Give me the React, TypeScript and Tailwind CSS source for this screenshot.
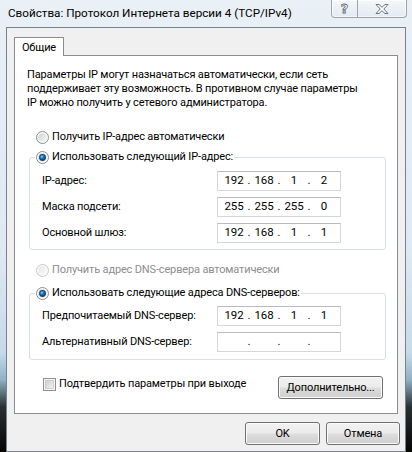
import React from 'react';

type IpValue = [string, string, string, string];

const glass =
  "bg-[linear-gradient(to_bottom,#e9f0f6_0%,#dfe9f2_55%,#c6dae8_78%,#8fb2c6_84%,#2a2f33_90%,#050505_100%)]";

function Radio({ checked = false, disabled = false }: { checked?: boolean; disabled?: boolean }) {
  return (
    <svg width="13" height="13" viewBox="0 0 13 13" className="shrink-0">
      <defs>
        <linearGradient id="rb-in" x1="0" y1="0" x2="1" y2="1">
          <stop offset="0" stopColor="#cfd1d3" />
          <stop offset="1" stopColor="#f7f7f7" />
        </linearGradient>
        <linearGradient id="rb-in-d" x1="0" y1="0" x2="1" y2="1">
          <stop offset="0" stopColor="#e6e6e6" />
          <stop offset="1" stopColor="#fbfbfb" />
        </linearGradient>
        <radialGradient id="rb-dot" cx="0.4" cy="0.35" r="0.7">
          <stop offset="0" stopColor="#8fd0ff" />
          <stop offset="0.45" stopColor="#1f72c4" />
          <stop offset="1" stopColor="#0b3a6e" />
        </radialGradient>
      </defs>
      <circle cx="6.5" cy="6.5" r="6" fill="#fafafa" stroke={disabled ? '#c6c7c8' : '#8b8d8f'} strokeWidth="1" />
      <circle cx="6.5" cy="6.5" r="4.3" fill={disabled ? 'url(#rb-in-d)' : 'url(#rb-in)'} />
      {checked && (
        <>
          <circle cx="6.5" cy="6.5" r="3.4" fill="#1c3f66" />
          <circle cx="6.5" cy="6.5" r="2.8" fill="url(#rb-dot)" />
        </>
      )}
    </svg>
  );
}

function Checkbox() {
  return (
    <svg width="13" height="13" viewBox="0 0 13 13" className="shrink-0">
      <defs>
        <linearGradient id="cb-in" x1="0" y1="0" x2="1" y2="1">
          <stop offset="0" stopColor="#cbcdcf" />
          <stop offset="1" stopColor="#f4f4f4" />
        </linearGradient>
      </defs>
      <rect x="0.5" y="0.5" width="12" height="12" fill="#f6f6f6" stroke="#8e8f8f" />
      <rect x="2.5" y="2.5" width="8" height="8" fill="url(#cb-in)" stroke="#b9bbbd" strokeWidth="0.6" />
    </svg>
  );
}

function IpBox({ value }: { value?: IpValue }) {
  const parts = value ?? ['', '', '', ''];
  return (
    <div className="w-[124px] h-[20px] bg-white border border-[#d3d6da] border-t-[#b8bcc2] flex items-center pl-[3px] leading-none text-[11.5px]">
      {parts.map((p, i) => (
        <React.Fragment key={i}>
          <span className="w-[26px] text-center">{p}</span>
          {i < 3 && <span className="w-[4px] text-center">.</span>}
        </React.Fragment>
      ))}
    </div>
  );
}

function Row({ label, value }: { label: string; value?: IpValue }) {
  return (
    <div className="flex items-center h-[20px]">
      <span className="w-[175px] leading-[14px] whitespace-nowrap">{label}</span>
      <IpBox value={value} />
    </div>
  );
}

function Button({ children, className = '' }: { children: React.ReactNode; className?: string }) {
  return (
    <button
      className={`h-[23px] rounded-[3px] border border-[#707070] bg-[linear-gradient(to_bottom,#f2f2f2_0%,#ebebeb_48%,#dddddd_52%,#cfcfcf_100%)] shadow-[inset_0_0_0_1px_#fbfbfb] text-[11px] tracking-[-0.15px] leading-none text-black whitespace-nowrap ${className}`}
    >
      {children}
    </button>
  );
}

export default function App() {
  return (
    <div className={`w-[412px] h-[452px] flex flex-col ${glass} font-['Roboto',sans-serif] text-[11px] tracking-[-0.15px] text-black overflow-hidden`}>
      {/* Title bar */}
      <div className="h-[27px] shrink-0 flex items-start">
        <div className="pl-[8px] pt-[5px] leading-[16px] whitespace-nowrap text-[11.7px] tracking-normal">
          Свойства: Протокол Интернета версии 4 (TCP/IPv4)
        </div>
        <div className="ml-auto mr-[5px] flex h-[18px] border border-t-0 border-[#9aa5b1] rounded-b-[4px] bg-[linear-gradient(to_bottom,#f4f7fa,#e3eaf1)] shadow-[inset_0_0_0_1px_#ffffffaa]">
          <div className="w-[26px] border-r border-[#9aa5b1] flex items-center justify-center text-[13px] font-bold leading-none text-white [-webkit-text-stroke:0.8px_#5d6670] font-['DejaVu_Sans',sans-serif]">
            ?
          </div>
          <div className="w-[48px] flex items-center justify-center">
            <svg width="14" height="12" viewBox="0 0 14 12">
              <path
                d="M1 1.5 L4 1.5 L7 4.3 L10 1.5 L13 1.5 L8.8 6 L13 10.5 L10 10.5 L7 7.7 L4 10.5 L1 10.5 L5.2 6 Z"
                fill="#ffffff"
                stroke="#5d6670"
                strokeWidth="0.9"
                strokeLinejoin="round"
              />
            </svg>
          </div>
        </div>
      </div>

      {/* Client area */}
      <div className="mx-[6px] flex-1 bg-[#f0f0f0] border border-[#77828c] flex flex-col pl-[7px]">
        <div className="mt-[9px] relative z-10 -mb-[1px] w-[50px] h-[19px] bg-white border border-b-0 border-[#898c95] flex items-center justify-center leading-none">
          Общие
        </div>
        <div className="w-[384px] h-[359px] bg-white border border-[#898c95] pl-[12px] pt-[12px] pr-[14px]">
          <p className="leading-[14px] whitespace-nowrap">
            Параметры IP могут назначаться автоматически, если сеть
            <br />
            поддерживает эту возможность. В противном случае параметры
            <br />
            IP можно получить у сетевого администратора.
          </p>

          <div className="mt-[20px] pl-[9px] h-[14px] flex items-center gap-[3px] leading-[14px]">
            <Radio />
            <span>Получить IP-адрес автоматически</span>
          </div>

          <fieldset className="mt-[6px] ml-[2px] w-[357px] border border-[#d5dfe5] rounded-[3px] pl-[12px] pt-[7px] pb-[6px]">
            <legend className="-ml-[7px] px-[1px] h-[14px] flex items-center gap-[3px] leading-[14px] bg-white whitespace-nowrap">
              <Radio checked />
              <span>Использовать следующий IP-адрес:</span>
            </legend>
            <div className="flex flex-col gap-[6px]">
              <Row label="IP-адрес:" value={['192', '168', '1', '2']} />
              <Row label="Маска подсети:" value={['255', '255', '255', '0']} />
              <Row label="Основной шлюз:" value={['192', '168', '1', '1']} />
            </div>
          </fieldset>

          <div className="mt-[13px] pl-[9px] h-[14px] flex items-center gap-[3px] leading-[14px] text-[#8d8d8d]">
            <Radio disabled />
            <span>Получить адрес DNS-сервера автоматически</span>
          </div>

          <fieldset className="mt-[9px] ml-[2px] w-[357px] border border-[#d5dfe5] rounded-[3px] pl-[12px] pt-[6px] pb-[7px]">
            <legend className="-ml-[7px] px-[1px] h-[14px] flex items-center gap-[3px] leading-[14px] bg-white whitespace-nowrap">
              <Radio checked />
              <span>Использовать следующие адреса DNS-серверов:</span>
            </legend>
            <div className="flex flex-col gap-[6px]">
              <Row label="Предпочитаемый DNS-сервер:" value={['192', '168', '1', '1']} />
              <Row label="Альтернативный DNS-сервер:" />
            </div>
          </fieldset>

          <div className="mt-[16px] flex items-start justify-between">
            <div className="pl-[16px] h-[14px] flex items-center gap-[3px] leading-[14px] mt-[1px] whitespace-nowrap">
              <Checkbox />
              <span>Подтвердить параметры при выходе</span>
            </div>
            <Button className="w-[105px] h-[22px]">Дополнительно...</Button>
          </div>
        </div>

        <div className="mt-[8px] flex justify-end gap-[6px] pr-[5px]">
          <Button className="w-[75px]">OK</Button>
          <Button className="w-[74px]">Отмена</Button>
        </div>
      </div>
    </div>
  );
}
